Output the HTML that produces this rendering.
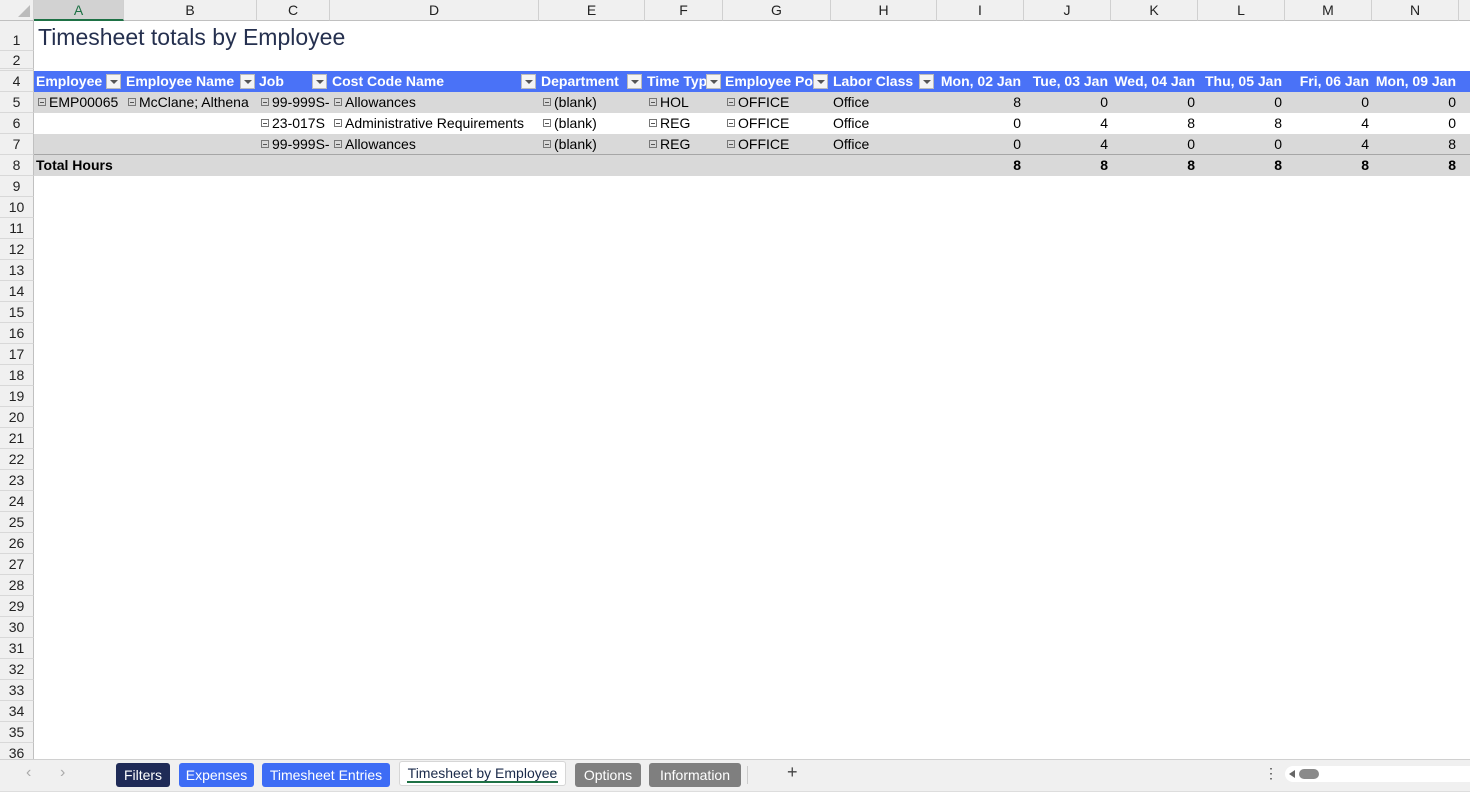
<!DOCTYPE html>
<html><head><meta charset="utf-8"><style>
*{margin:0;padding:0;box-sizing:border-box}
body{width:1470px;height:796px;overflow:hidden;background:#fff;font-family:"Liberation Sans",Arial,sans-serif;font-size:14px;color:#000;position:relative}
.a{position:absolute;white-space:nowrap;overflow:hidden}
.ch{top:0;height:21px;background:#f0f0f0;border-right:1px solid #d0d0d0;border-bottom:1px solid #c0c0c0;text-align:center;line-height:21px;font-size:14px;color:#222}
.rh{left:0;width:34px;background:#f0f0f0;border-right:1px solid #c0c0c0;border-bottom:1px solid #d8d8d8;text-align:center;font-size:14px;color:#222}
.band{left:34px;width:1436px;height:21px}
.hd{color:#fff;font-weight:bold;line-height:21px;top:71px;height:21px}
.dd{position:absolute;top:3px;width:15px;height:15px;background:#f4f4f4;border:1px solid #bbb}
.dd:after{content:"";position:absolute;left:3px;top:5px;border-left:4px solid transparent;border-right:4px solid transparent;border-top:4px solid #555}
.c{line-height:21px;height:21px}
.m{display:inline-block;width:8px;height:8px;border:1px solid #777;margin-right:3px;vertical-align:1px;position:relative}
.m:after{content:"";position:absolute;left:1px;top:3px;width:4px;height:1px;background:#555}
.r{text-align:right}
.tab{position:absolute;top:763px;height:24px;line-height:24px;border-radius:3px;color:#fff;text-align:center;font-size:14px}
</style></head><body>
<div class="a ch" style="left:0;width:34px;"><div style="position:absolute;right:3px;bottom:3px;border-left:12px solid transparent;border-bottom:12px solid #bbb"></div></div>
<div class="a ch" style="left:34px;width:90px;background:#d2d2d2;border-bottom:2px solid #1e7145;color:#1e7145">A</div>
<div class="a ch" style="left:124px;width:133px">B</div>
<div class="a ch" style="left:257px;width:73px">C</div>
<div class="a ch" style="left:330px;width:209px">D</div>
<div class="a ch" style="left:539px;width:106px">E</div>
<div class="a ch" style="left:645px;width:78px">F</div>
<div class="a ch" style="left:723px;width:108px">G</div>
<div class="a ch" style="left:831px;width:106px">H</div>
<div class="a ch" style="left:937px;width:87px">I</div>
<div class="a ch" style="left:1024px;width:87px">J</div>
<div class="a ch" style="left:1111px;width:87px">K</div>
<div class="a ch" style="left:1198px;width:87px">L</div>
<div class="a ch" style="left:1285px;width:87px">M</div>
<div class="a ch" style="left:1372px;width:87px">N</div>
<div class="a ch" style="left:1459px;width:20px"></div>
<div class="a rh" style="top:21px;height:30px;line-height:38px">1</div>
<div class="a rh" style="top:51px;height:18px;line-height:18px">2</div>
<div class="a rh" style="top:69px;height:2px"></div>
<div class="a rh" style="top:71px;height:21px;line-height:21px">4</div>
<div class="a rh" style="top:92px;height:21px;line-height:21px">5</div>
<div class="a rh" style="top:113px;height:21px;line-height:21px">6</div>
<div class="a rh" style="top:134px;height:21px;line-height:21px">7</div>
<div class="a rh" style="top:155px;height:21px;line-height:21px">8</div>
<div class="a rh" style="top:176px;height:21px;line-height:21px">9</div>
<div class="a rh" style="top:197px;height:21px;line-height:21px">10</div>
<div class="a rh" style="top:218px;height:21px;line-height:21px">11</div>
<div class="a rh" style="top:239px;height:21px;line-height:21px">12</div>
<div class="a rh" style="top:260px;height:21px;line-height:21px">13</div>
<div class="a rh" style="top:281px;height:21px;line-height:21px">14</div>
<div class="a rh" style="top:302px;height:21px;line-height:21px">15</div>
<div class="a rh" style="top:323px;height:21px;line-height:21px">16</div>
<div class="a rh" style="top:344px;height:21px;line-height:21px">17</div>
<div class="a rh" style="top:365px;height:21px;line-height:21px">18</div>
<div class="a rh" style="top:386px;height:21px;line-height:21px">19</div>
<div class="a rh" style="top:407px;height:21px;line-height:21px">20</div>
<div class="a rh" style="top:428px;height:21px;line-height:21px">21</div>
<div class="a rh" style="top:449px;height:21px;line-height:21px">22</div>
<div class="a rh" style="top:470px;height:21px;line-height:21px">23</div>
<div class="a rh" style="top:491px;height:21px;line-height:21px">24</div>
<div class="a rh" style="top:512px;height:21px;line-height:21px">25</div>
<div class="a rh" style="top:533px;height:21px;line-height:21px">26</div>
<div class="a rh" style="top:554px;height:21px;line-height:21px">27</div>
<div class="a rh" style="top:575px;height:21px;line-height:21px">28</div>
<div class="a rh" style="top:596px;height:21px;line-height:21px">29</div>
<div class="a rh" style="top:617px;height:21px;line-height:21px">30</div>
<div class="a rh" style="top:638px;height:21px;line-height:21px">31</div>
<div class="a rh" style="top:659px;height:21px;line-height:21px">32</div>
<div class="a rh" style="top:680px;height:21px;line-height:21px">33</div>
<div class="a rh" style="top:701px;height:21px;line-height:21px">34</div>
<div class="a rh" style="top:722px;height:21px;line-height:21px">35</div>
<div class="a rh" style="top:743px;height:18px;line-height:21px">36</div>
<div class="a" style="left:38px;top:24px;font-size:23px;color:#25304f">Timesheet totals by Employee</div>
<div class="a band" style="top:71px;background:#4a72f7"></div>
<div class="a band" style="top:92px;background:#d9d9d9"></div>
<div class="a band" style="top:134px;background:#d9d9d9;border-bottom:1px solid #a6a6a6"></div>
<div class="a band" style="top:155px;background:#d9d9d9"></div>
<div class="a hd" style="left:36px">Employee</div><div class="dd" style="left:106px;top:74px"></div>
<div class="a hd" style="left:126px;width:113px">Employee Name</div><div class="dd" style="left:240px;top:74px"></div>
<div class="a hd" style="left:259px">Job</div><div class="dd" style="left:312px;top:74px"></div>
<div class="a hd" style="left:332px">Cost Code Name</div><div class="dd" style="left:521px;top:74px"></div>
<div class="a hd" style="left:541px">Department</div><div class="dd" style="left:627px;top:74px"></div>
<div class="a hd" style="left:647px;width:60px">Time Type</div><div class="dd" style="left:706px;top:74px"></div>
<div class="a hd" style="left:725px;width:88px">Employee Po</div><div class="dd" style="left:813px;top:74px"></div>
<div class="a hd" style="left:833px">Labor Class</div><div class="dd" style="left:919px;top:74px"></div>
<div class="a hd r" style="left:937px;width:84px">Mon, 02 Jan</div>
<div class="a hd r" style="left:1024px;width:84px">Tue, 03 Jan</div>
<div class="a hd r" style="left:1111px;width:84px">Wed, 04 Jan</div>
<div class="a hd r" style="left:1198px;width:84px">Thu, 05 Jan</div>
<div class="a hd r" style="left:1285px;width:84px">Fri, 06 Jan</div>
<div class="a hd r" style="left:1372px;width:84px">Mon, 09 Jan</div>
<div class="a c" style="left:38px;top:92px"><span class="m"></span>EMP00065</div>
<div class="a c" style="left:128px;top:92px;width:129px"><span class="m"></span>McClane; Althena</div>
<div class="a c" style="left:261px;top:92px;width:68px"><span class="m"></span>99-999S-</div>
<div class="a c" style="left:334px;top:92px"><span class="m"></span>Allowances</div>
<div class="a c" style="left:543px;top:92px"><span class="m"></span>(blank)</div>
<div class="a c" style="left:649px;top:92px"><span class="m"></span>HOL</div>
<div class="a c" style="left:727px;top:92px"><span class="m"></span>OFFICE</div>
<div class="a c" style="left:833px;top:92px">Office</div>
<div class="a c" style="left:261px;top:113px;width:68px"><span class="m"></span>23-017S</div>
<div class="a c" style="left:334px;top:113px;width:205px"><span class="m"></span>Administrative Requirements</div>
<div class="a c" style="left:543px;top:113px"><span class="m"></span>(blank)</div>
<div class="a c" style="left:649px;top:113px"><span class="m"></span>REG</div>
<div class="a c" style="left:727px;top:113px"><span class="m"></span>OFFICE</div>
<div class="a c" style="left:833px;top:113px">Office</div>
<div class="a c" style="left:261px;top:134px;width:68px"><span class="m"></span>99-999S-</div>
<div class="a c" style="left:334px;top:134px"><span class="m"></span>Allowances</div>
<div class="a c" style="left:543px;top:134px"><span class="m"></span>(blank)</div>
<div class="a c" style="left:649px;top:134px"><span class="m"></span>REG</div>
<div class="a c" style="left:727px;top:134px"><span class="m"></span>OFFICE</div>
<div class="a c" style="left:833px;top:134px">Office</div>
<div class="a c r" style="left:937px;top:92px;width:84px">8</div>
<div class="a c r" style="left:1024px;top:92px;width:84px">0</div>
<div class="a c r" style="left:1111px;top:92px;width:84px">0</div>
<div class="a c r" style="left:1198px;top:92px;width:84px">0</div>
<div class="a c r" style="left:1285px;top:92px;width:84px">0</div>
<div class="a c r" style="left:1372px;top:92px;width:84px">0</div>
<div class="a c r" style="left:937px;top:113px;width:84px">0</div>
<div class="a c r" style="left:1024px;top:113px;width:84px">4</div>
<div class="a c r" style="left:1111px;top:113px;width:84px">8</div>
<div class="a c r" style="left:1198px;top:113px;width:84px">8</div>
<div class="a c r" style="left:1285px;top:113px;width:84px">4</div>
<div class="a c r" style="left:1372px;top:113px;width:84px">0</div>
<div class="a c r" style="left:937px;top:134px;width:84px">0</div>
<div class="a c r" style="left:1024px;top:134px;width:84px">4</div>
<div class="a c r" style="left:1111px;top:134px;width:84px">0</div>
<div class="a c r" style="left:1198px;top:134px;width:84px">0</div>
<div class="a c r" style="left:1285px;top:134px;width:84px">4</div>
<div class="a c r" style="left:1372px;top:134px;width:84px">8</div>
<div class="a c" style="left:36px;top:155px;font-weight:bold">Total Hours</div>
<div class="a c r" style="left:937px;top:155px;width:84px;font-weight:bold">8</div>
<div class="a c r" style="left:1024px;top:155px;width:84px;font-weight:bold">8</div>
<div class="a c r" style="left:1111px;top:155px;width:84px;font-weight:bold">8</div>
<div class="a c r" style="left:1198px;top:155px;width:84px;font-weight:bold">8</div>
<div class="a c r" style="left:1285px;top:155px;width:84px;font-weight:bold">8</div>
<div class="a c r" style="left:1372px;top:155px;width:84px;font-weight:bold">8</div>
<div class="a" style="left:0;top:759px;width:1470px;height:32px;background:#f0f0f0;border-top:1px solid #d0d0d0"></div>
<div class="a" style="left:0;top:791px;width:1470px;height:5px;background:#fff;border-top:1px solid #ddd"></div>
<div class="a" style="left:26px;top:764px;color:#aaa;font-size:16px">‹</div>
<div class="a" style="left:60px;top:764px;color:#aaa;font-size:16px">›</div>
<div class="tab" style="left:116px;width:54px;background:#1f2b57">Filters</div>
<div class="tab" style="left:179px;width:75px;background:#3d6cf5">Expenses</div>
<div class="tab" style="left:262px;width:128px;background:#3d6cf5">Timesheet Entries</div>
<div class="tab" style="left:399px;width:167px;background:#fff;color:#1a2a4a;border:1px solid #d6d6d6;top:761px;height:25px;line-height:22px">Timesheet by Employee<div style="position:absolute;left:7px;right:7px;bottom:2px;height:2px;background:#1e7145"></div></div>
<div class="tab" style="left:575px;width:66px;background:#7f7f7f">Options</div>
<div class="tab" style="left:649px;width:92px;background:#7f7f7f">Information</div>
<div class="a" style="left:747px;top:766px;width:1px;height:18px;background:#ccc"></div>
<div class="a" style="left:787px;top:762px;font-size:18px;color:#444">+</div>
<div class="a" style="left:1264px;top:765px;font-size:14px;color:#444">⋮</div>
<div class="a" style="left:1285px;top:766px;width:185px;height:16px;background:#fff;border-radius:8px 0 0 8px"></div>
<div class="a" style="left:1289px;top:770px;border-right:6px solid #666;border-top:4px solid transparent;border-bottom:4px solid transparent"></div>
<div class="a" style="left:1299px;top:769px;width:20px;height:10px;background:#8a8a8a;border-radius:5px"></div>
</body></html>
